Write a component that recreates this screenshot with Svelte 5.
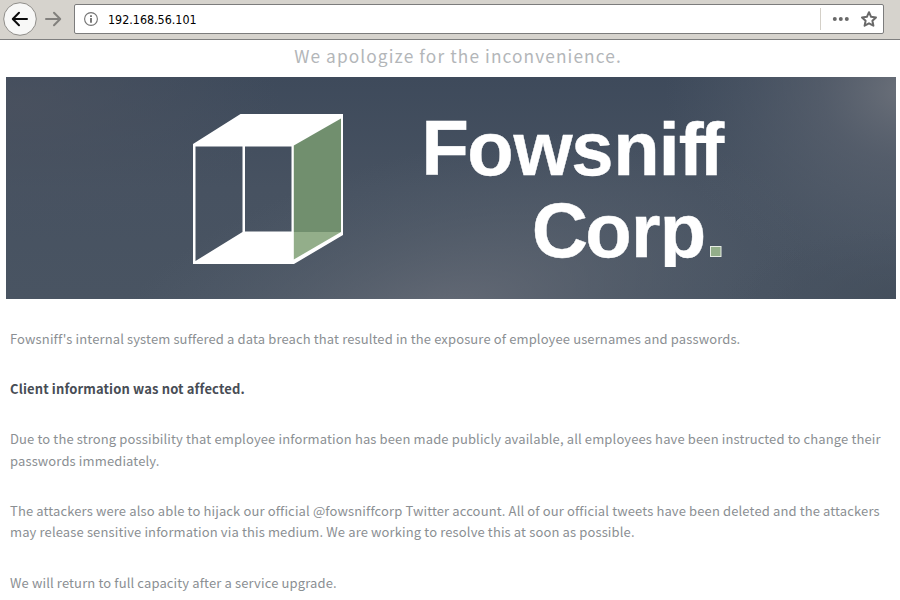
<script>
  const paragraphs = [
    { lines: [{ t: "Fowsniff's internal system suffered a data breach that resulted in the exposure of employee usernames and passwords.", s: 0.126 }] },
    { strong: true, lines: [{ t: 'Client information was not affected.', s: 0.135 }] },
    { lines: [
      { t: 'Due to the strong possibility that employee information has been made publicly available, all employees have been instructed to change their', s: 0.13 },
      { t: 'passwords immediately.', s: 0.13 }
    ] },
    { lines: [
      { t: 'The attackers were also able to hijack our official @fowsniffcorp Twitter account. All of our official tweets have been deleted and the attackers', s: 0.13 },
      { t: 'may release sensitive information via this medium. We are working to resolve this at soon as possible.', s: 0.13 }
    ] },
    { lines: [{ t: 'We will return to full capacity after a service upgrade.', s: 0.13 }] }
  ];
</script>

<div class="window">
  <header class="toolbar">
    <svg class="nav" width="74" height="39" viewBox="0 0 74 39">
      <circle cx="20" cy="19" r="16.3" fill="#f8f8f7" stroke="#8f8d89" />
      <path d="M27 19H13M19 12.8L12.8 19L19 25.2" fill="none" stroke="#0c0c0c" stroke-width="2" stroke-linecap="round" stroke-linejoin="round" />
      <path d="M46 19H60M54 12.8L60.2 19L54 25.2" fill="none" stroke="#82807d" stroke-width="2" stroke-linecap="round" stroke-linejoin="round" />
    </svg>
    <div class="urlbar">
      <svg width="14" height="14" viewBox="0 0 14 14">
        <circle cx="7" cy="7" r="6.4" fill="none" stroke="#737373" stroke-width="1.1" />
        <path d="M7 3.2V4.9M7 6V10.8" stroke="#6b6b6b" stroke-width="1.8" />
      </svg>
      <span class="address">192.168.56.101</span>
      <span class="divider"></span>
      <svg class="actions" width="62" height="28" viewBox="0 0 62 28">
        <g fill="#696969">
          <circle cx="13.8" cy="14" r="2" /><circle cx="19.8" cy="14" r="2" /><circle cx="25.8" cy="14" r="2" />
        </g>
        <path d="M48 7.2L50.1 11.8L55 12.4L51.4 15.8L52.4 20.7L48 18.3L43.6 20.7L44.6 15.8L41 12.4L45.9 11.8Z" fill="none" stroke="#696969" stroke-width="2" stroke-linejoin="round" />
      </svg>
    </div>
  </header>

  <main>
    <h1>We apologize for the inconvenience.</h1>
    <svg class="banner" width="890" height="222" viewBox="6 77 890 222">
      <defs>
        <linearGradient id="base" x1="0" y1="0" x2="0" y2="1">
          <stop offset="0" stop-color="#3e4a5b" />
          <stop offset="0.5" stop-color="#475261" />
          <stop offset="1" stop-color="#495462" />
        </linearGradient>
        <radialGradient id="bottomGlow" gradientUnits="userSpaceOnUse" cx="0" cy="0" r="1" gradientTransform="translate(445 315) rotate(-14) scale(370 165)">
          <stop offset="0" stop-color="#696e79" stop-opacity="0.85" />
          <stop offset="0.5" stop-color="#5f6773" stop-opacity="0.42" />
          <stop offset="1" stop-color="#566170" stop-opacity="0" />
        </radialGradient>
        <radialGradient id="cornerGlow" gradientUnits="userSpaceOnUse" cx="0" cy="0" r="1" gradientTransform="translate(905 90) scale(240 200)">
          <stop offset="0" stop-color="#6d727b" stop-opacity="0.95" />
          <stop offset="0.35" stop-color="#5f6672" stop-opacity="0.6" />
          <stop offset="1" stop-color="#535e6c" stop-opacity="0" />
        </radialGradient>
        <radialGradient id="leftGlow" gradientUnits="userSpaceOnUse" cx="0" cy="0" r="1" gradientTransform="translate(20 105) scale(260 130)">
          <stop offset="0" stop-color="#4b525f" stop-opacity="0.8" />
          <stop offset="1" stop-color="#4a5361" stop-opacity="0" />
        </radialGradient>
        <radialGradient id="edgeShade" gradientUnits="userSpaceOnUse" cx="0" cy="0" r="1" gradientTransform="translate(896 300) scale(170 70)">
          <stop offset="0" stop-color="#434e5b" stop-opacity="0.8" />
          <stop offset="1" stop-color="#454f5e" stop-opacity="0" />
        </radialGradient>
        <clipPath id="brandClip"><rect x="400" y="100" width="340" height="167" /></clipPath>
      </defs>
      <rect x="6" y="77" width="890" height="222" fill="url(#base)" />
      <rect x="6" y="77" width="890" height="222" fill="url(#leftGlow)" />
      <rect x="6" y="77" width="890" height="222" fill="url(#bottomGlow)" />
      <rect x="6" y="77" width="890" height="222" fill="url(#cornerGlow)" />
      <rect x="6" y="77" width="890" height="222" fill="url(#edgeShade)" />

      <path d="M240.5 114H343V235L294 264H193V144Z M195.5 146.5V261L242.5 232V146.5Z M245 146.5V231.5H291.5V146.5Z" fill="#fff" fill-rule="evenodd" />
      <path d="M293.8 145.5L341 118.5V232H293.8Z" fill="#718f6e" />
      <path d="M293.8 232H341L293.8 259.5Z" fill="#93ae8a" />

      <g class="brand" clip-path="url(#brandClip)">
        <text y="175" x="421.2 467.3 513.5 571.3 613.2 658.8 678.8 699.2"><tspan class="cap">F</tspan>owsn<tspan class="tall">iff</tspan></text>
        <text y="257" x="531.8 585.2 631 659.8"><tspan class="cap">C</tspan>orp</text>
      </g>
      <rect x="710.5" y="246.5" width="10.5" height="10" fill="#93ae8a" stroke="#e6ece4" />
    </svg>

    <article>
      {#each paragraphs as p}
        <p class:strong={p.strong}>
          {#each p.lines as line}
            <span style:letter-spacing="{line.s}px">{line.t}</span>
          {/each}
        </p>
      {/each}
    </article>
  </main>
</div>

<style>
  :global(body) { margin: 0; background: #fff; }
  .window { width: 900px; height: 600px; overflow: hidden; background: #fff; }
  .toolbar { box-sizing: border-box; height: 40px; display: flex; background: #d6d3cd; border-bottom: 1px solid #7f7f7f; }
  .nav { flex: none; }
  .urlbar { box-sizing: border-box; width: 810px; height: 30px; margin-top: 4px; padding-left: 9px; display: flex; align-items: center; background: #fff; border: 1px solid #7c7c7c; border-radius: 2px; }
  .address { flex: 1; margin-left: 10px; padding-top: 1px; font: 12.4px/28px "DejaVu Sans Condensed", "DejaVu Sans", sans-serif; font-stretch: condensed; color: #000; }
  .divider { width: 1px; height: 22px; background: #d4d0c8; }
  .actions { flex: none; }
  main { display: flex; flex-direction: column; font-family: "Noto Sans CJK JP", "Noto Sans CJK SC", sans-serif; }
  h1 { margin: 0; padding-left: 16px; height: 37px; font-size: 17.3px; line-height: 31px; font-weight: 400; letter-spacing: 1.1px; text-align: center; color: #b3b6b9; }
  .banner { display: block; margin-left: 6px; }
  .brand { font-family: "Liberation Sans", Arial, sans-serif; font-weight: 700; font-size: 76px; fill: #fff; stroke: #fff; stroke-width: 0.4; }
  .cap { font-size: 78px; }
  .tall { font-size: 75px; }
  article { display: flex; flex-direction: column; gap: 28.5px; padding: 29px 0 0 10px; }
  p { margin: 0; font-size: 13px; line-height: 21.6px; color: #8b8f93; }
  p span { display: block; white-space: nowrap; }
  .strong { font-weight: 700; color: #484d55; }
</style>
